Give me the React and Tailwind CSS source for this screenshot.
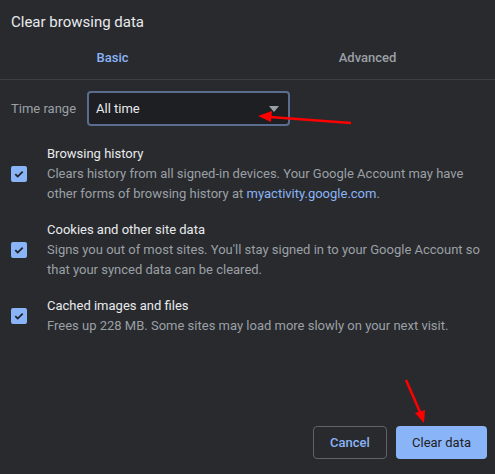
import React from "react";

const ITEMS = [
  {
    key: "history",
    title: "Browsing history",
    body: (
      <>
        Clears history from all signed-in devices. Your Google Account may have
        other forms of browsing history at{" "}
        <span className="text-[#8ab4f8]">myactivity.google.com</span>.
      </>
    ),
  },
  {
    key: "cookies",
    title: "Cookies and other site data",
    body: "Signs you out of most sites. You'll stay signed in to your Google Account so that your synced data can be cleared.",
  },
  {
    key: "cache",
    title: "Cached images and files",
    body: "Frees up 228 MB. Some sites may load more slowly on your next visit.",
  },
];

function Checkbox() {
  return (
    <div className="flex h-4 w-4 shrink-0 items-center justify-center rounded-[2px] bg-[#8ab4f8]">
      <svg width="12" height="12" viewBox="0 0 12 12" fill="none">
        <path d="M2.3 6.2l2.4 2.4 5-5" stroke="#202124" strokeWidth="1.8" />
      </svg>
    </div>
  );
}

export default function App() {
  return (
    <div
      className="relative h-[474px] w-[495px] overflow-hidden bg-[#292a2d] text-[13px] text-[#e8eaed]"
      style={{ fontFamily: "Roboto, 'Liberation Sans', sans-serif" }}
    >
      <h1 className="px-[11px] pt-[12px] text-[15px] leading-[20px] text-[#e8eaed]">
        Clear browsing data
      </h1>

      <div className="mt-[5px] flex border-b border-[#3c4043]">
        <button type="button" className="h-[42px] w-[225px] font-medium text-[#8ab4f8]">
          Basic
        </button>
        <button type="button" className="h-[42px] flex-1 pl-[15px] font-medium text-[#9aa0a6]">
          Advanced
        </button>
      </div>

      <div className="mt-[11px] flex items-center px-[11px]">
        <span className="w-[76px] text-[#9aa0a6]">Time range</span>
        <div className="flex h-[35px] w-[203px] items-center justify-between rounded-[4px] border-2 border-[#5b6d8f] bg-[#1e1f22] pl-[7px] pr-[9px] text-[#e8eaed]">
          <span>All time</span>
          <svg width="10" height="6" viewBox="0 0 10 6">
            <path d="M0 0h10L5 6z" fill="#9aa0a6" />
          </svg>
        </div>
      </div>

      <div className="mt-[18px] flex flex-col gap-[16px]">
        {ITEMS.map((item) => (
          <div key={item.key} className="flex items-center">
            <div className="w-[47px] shrink-0 pl-[11px]">
              <Checkbox />
            </div>
            <div className="pr-[10px]">
              <div className="leading-[20px] text-[#e8eaed]">{item.title}</div>
              <div className="leading-[20px] text-[#9aa0a6]">{item.body}</div>
            </div>
          </div>
        ))}
      </div>

      <div className="absolute bottom-[15px] right-[8px] flex gap-[9px]">
        <button
          type="button"
          className="h-[33px] w-[74px] rounded-[4px] border border-[#5f6368] font-medium text-[#8ab4f8]"
        >
          Cancel
        </button>
        <button
          type="button"
          className="h-[33px] w-[91px] rounded-[4px] bg-[#8ab4f8] text-[#202124]"
        >
          Clear data
        </button>
      </div>

      <svg className="pointer-events-none absolute left-0 top-0" width="495" height="474">
        <line x1="351" y1="123" x2="270" y2="117" stroke="#ff0000" strokeWidth="2.5" />
        <path d="M258 116l14-5-1 11z" fill="#ff0000" />
        <line x1="406" y1="380" x2="420" y2="412" stroke="#ff0000" strokeWidth="2.5" />
        <path d="M424 423l-9-10 10-3z" fill="#ff0000" />
      </svg>
    </div>
  );
}
